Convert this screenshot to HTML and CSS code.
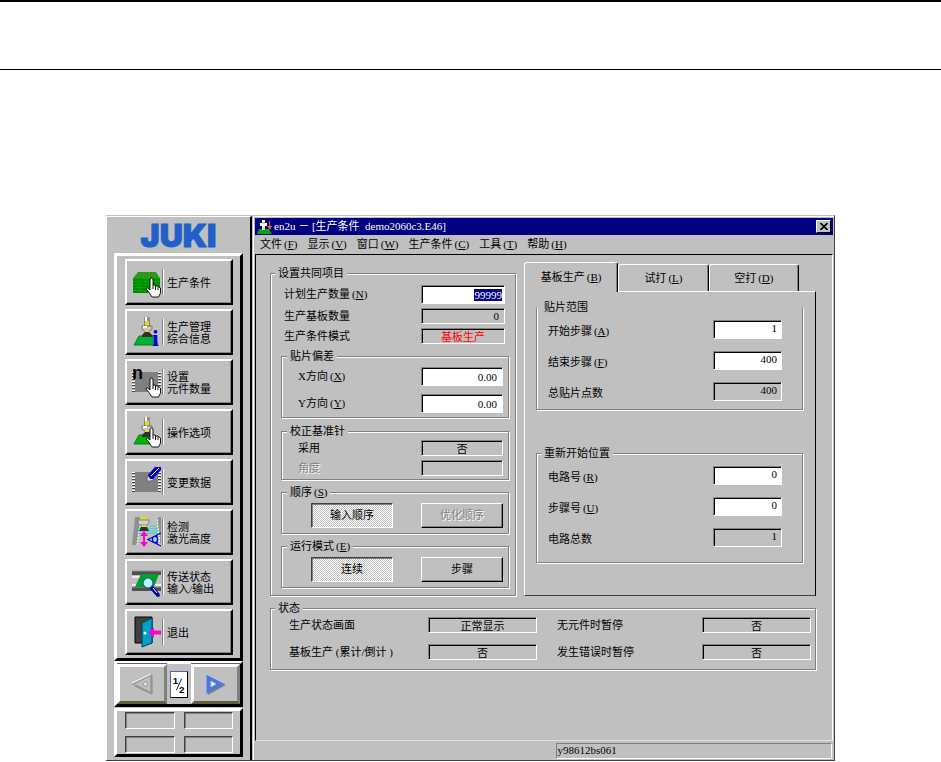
FILE: index.html
```html
<!DOCTYPE html>
<html lang="zh-CN">
<head>
    <meta charset="UTF-8">
    <meta name="viewport" content="width=device-width, initial-scale=1.0">
    <title>生产条件</title>
    <link rel="stylesheet" href="styles.css">
</head>
<body>
    <!-- shared icon parts -->
    <svg class="defs" aria-hidden="true">
        <symbol id="hand" viewBox="0 0 17 21">
            <path d="M5 2Q6.500 0 8 2V8L10 8 11 9 13 9 14 10 15.500 11V16L13.500 20H7L4 15.500 1 12 2 10.500 5 13Z" fill="#fff" stroke="#000" stroke-width="0.9"/>
            <path d="M8 8v4M10.500 9v4M13 10v3" stroke="#000" stroke-width="0.9"/>
        </symbol>
        <symbol id="nozzle" viewBox="0 0 12 20">
            <path d="M3 0h6v5H3z" fill="#909090"/>
            <path d="M4 0h2v5H4z" fill="#fff"/>
            <path d="M3 4h6v5H3z" fill="#808080"/>
            <path d="M4 4h4v5H4z" fill="#e8d820"/>
            <path d="M1 9h10v3l-2 2H3l-2-2z" fill="#c8c8c8" stroke="#606060" stroke-width="0.8"/>
            <path d="M2 9h4v2H2z" fill="#fff"/>
            <path d="M4 13h4v2H4z" fill="#e8d820"/>
            <path d="M4 15h4l3 3v2H1v-2z" fill="#303030"/>
        </symbol>
        <symbol id="chip" viewBox="0 0 30 20">
            <path d="M1.500 0v20M27.500 0v20" stroke="#fff" stroke-width="3" stroke-dasharray="1 2"/>
            <path d="M1.500 1v19M27.500 1v19" stroke="#404040" stroke-width="3" stroke-dasharray="1 2"/>
            <path d="M3 0h23v20H3z" fill="#808080"/>
        </symbol>
    </svg>

    <header class="page-head"></header>

    <div class="window">
        <aside class="sidebar">
            <div class="logo">JUKI</div>

            <nav class="panel nav">
                <button class="nav-btn" type="button">
                    <svg class="icon" viewBox="0 0 30 32">
                        <path d="M6 6h18l4 6H1z" fill="#20b020"/>
                        <path d="M6 7h18M5 9h20M3 11h23" stroke="#506010" stroke-dasharray="2 1"/>
                        <path d="M1 12h27v15H1z" fill="#00a800"/>
                        <path d="M1 14h27M1 17h27M1 20h27M1 23h27M1 26h27" stroke="#007000"/>
                        <use href="#hand" x="13" y="11" width="17" height="21"/>
                    </svg>
                    <span class="nav-text">生产条件</span>
                </button>
                <button class="nav-btn" type="button">
                    <svg class="icon" viewBox="0 0 30 32">
                        <path d="M7 20h15l4 9H2z" fill="#00b030" stroke="#008020"/>
                        <use href="#nozzle" x="9" y="1" width="12" height="20"/>
                        <text x="20" y="30" class="glyph-i">i</text>
                    </svg>
                    <span class="nav-text">生产管理<br>综合信息</span>
                </button>
                <button class="nav-btn" type="button">
                    <svg class="icon" viewBox="0 0 30 32">
                        <use href="#chip" x="0" y="6" width="30" height="20"/>
                        <text x="0" y="13" class="glyph-n">n</text>
                        <use href="#hand" x="13" y="11" width="17" height="21"/>
                    </svg>
                    <span class="nav-text">设置<br>元件数量</span>
                </button>
                <button class="nav-btn" type="button">
                    <svg class="icon" viewBox="0 0 30 32">
                        <path d="M7 19h13l4 9H2z" fill="#00b800" stroke="#008020"/>
                        <use href="#nozzle" x="9" y="1" width="12" height="20"/>
                        <use href="#hand" x="13" y="11" width="17" height="21"/>
                    </svg>
                    <span class="nav-text">操作选项</span>
                </button>
                <button class="nav-btn" type="button">
                    <svg class="icon" viewBox="0 0 30 32">
                        <use href="#chip" x="0" y="6" width="30" height="20"/>
                        <path d="M15 12l3-3 4 4-3 2h-4z" fill="#ddd" stroke="#606060" stroke-width="0.8"/>
                        <path d="M16 9l7-8h6v3l-8 9h-3z" fill="#0000c8"/>
                        <path d="M19 10l8-8" stroke="#fff"/>
                    </svg>
                    <span class="nav-text">变更数据</span>
                </button>
                <button class="nav-btn" type="button">
                    <svg class="icon" viewBox="0 0 30 32">
                        <path d="M3 1h6L5 29H0z" fill="#909090"/>
                        <path d="M25 1h4v28h-1z" fill="#909090"/>
                        <path d="M5 29L9 1M28 29L25 1" stroke="#fff" stroke-dasharray="2 1"/>
                        <path d="M7 10h18M6 12.500h20M6 15h20M5 17.500h22" stroke="#20d8d8" stroke-width="0.8"/>
                        <path d="M8 1h7v3H8z" fill="#e8d820"/>
                        <path d="M6 4h11v3l-2 2H8L6 7z" fill="#d0d0d0" stroke="#707070" stroke-width="0.8"/>
                        <path d="M10 9h4v2h-4z" fill="#e8d820"/>
                        <path d="M9 11h6l2 4H7z" fill="#303030"/>
                        <path d="M12 15l4 5h-3v6h3l-4 5-4-5h3v-6H8z" fill="#f0c"/>
                        <path d="M29 17L16 23.500 29 30M25 19v9" fill="none" stroke="#0000d0" stroke-width="1.2"/>
                        <ellipse cx="23" cy="23.500" rx="2.500" ry="3" fill="#a0e0ff" stroke="#0000d0" stroke-width="1.2"/>
                    </svg>
                    <span class="nav-text">检测<br>激光高度</span>
                </button>
                <button class="nav-btn" type="button">
                    <svg class="icon" viewBox="0 0 30 32">
                        <path d="M0 5h29v4H0zM0 21h29v4H0z" fill="#505050"/>
                        <path d="M0 5h29M0 21h29" stroke="#909090"/>
                        <path d="M0 11h8M0 19h29" stroke="#eee" stroke-width="2"/>
                        <path d="M9 8h18l-5 13H3z" fill="#00a030"/>
                        <path d="M20 22l6 7" stroke="#0000a0" stroke-width="4" stroke-linecap="round"/>
                        <path d="M21 22l4 5" stroke="#fff"/>
                        <circle cx="16" cy="17" r="5" fill="#b8f4ff" stroke="#206080" stroke-width="1.2"/>
                    </svg>
                    <span class="nav-text">传送状态<br>输入/输出</span>
                </button>
                <button class="nav-btn" type="button">
                    <svg class="icon" viewBox="0 0 30 32">
                        <path d="M3 1h17v26H3z" fill="#404040" stroke="#000"/>
                        <path d="M10 7l10-5v25l-10 4z" fill="#00a0c8" stroke="#004060"/>
                        <circle cx="13" cy="17" r="1.500" fill="#fff"/>
                        <path d="M16 16.500l6-5v3h7v4h-7v3z" fill="#f0c"/>
                    </svg>
                    <span class="nav-text">退出</span>
                </button>
            </nav>

            <div class="panel pager">
                <button class="page-btn" type="button" aria-label="上一页">
                    <svg width="22" height="22" viewBox="0 0 22 22">
                        <path d="M2 11L20 2v18z" fill="#c0c0c0" stroke="#a0a0a0" stroke-width="2"/>
                        <path d="M1 10L20 1" stroke="#fff"/>
                        <path d="M21 2v19L4 13" fill="none" stroke="#888"/>
                        <path d="M11 11l5-3v6z" fill="#e8e8e8" stroke="#999"/>
                    </svg>
                </button>
                <svg class="page-no" width="18" height="27" viewBox="0 0 18 27">
                    <text x="2" y="13">1</text>
                    <path d="M6 20l6-13" stroke="#000"/>
                    <text x="9" y="23">2</text>
                </svg>
                <button class="page-btn" type="button" aria-label="下一页">
                    <svg width="22" height="22" viewBox="0 0 22 22">
                        <path d="M22 12L4 22V4z" fill="#808080"/>
                        <path d="M21 11L2 21V1z" fill="#5078d0"/>
                        <path d="M2 20V1l18 9" fill="none" stroke="#b0c8ff"/>
                        <path d="M12 11l-5-3v6z" fill="#fff" stroke="#a0b8f0"/>
                    </svg>
                </button>
            </div>

            <div class="panel slots">
                <div class="slot"></div>
                <div class="slot"></div>
                <div class="slot"></div>
                <div class="slot"></div>
            </div>
        </aside>

        <main class="main">
            <div class="titlebar">
                <svg class="app-icon" width="15" height="15" viewBox="0 0 15 15">
                    <path d="M2 10h10l3 5H0z" fill="#00a020"/>
                    <path d="M5 1h3v3h2v3H8v4H5V7H3V4h2z" fill="#fff"/>
                    <path d="M5 3h3v2H5zM6 8h2v3H6z" fill="#e8e020"/>
                    <path d="M12 2v5h-2l3 4 2-4h-2V2z" fill="#f06020"/>
                </svg>
                <span class="title">en2u － [生产条件&nbsp; demo2060c3.E46]</span>
                <button class="close" type="button" aria-label="关闭">
                    <svg width="8" height="7" viewBox="0 0 8 7"><path d="M0.500 0l7 7M7.500 0l-7 7" stroke="#000" stroke-width="1.600"/></svg>
                </button>
            </div>

            <div class="menubar">
                <button type="button">文件<span class="key">(<u>F</u>)</span></button>
                <button type="button">显示<span class="key">(<u>V</u>)</span></button>
                <button type="button">窗口<span class="key">(<u>W</u>)</span></button>
                <button type="button">生产条件<span class="key">(<u>C</u>)</span></button>
                <button type="button">工具<span class="key">(<u>T</u>)</span></button>
                <button type="button">帮助<span class="key">(<u>H</u>)</span></button>
            </div>

            <div class="workspace">
                <div class="columns">
                    <fieldset class="group common">
                        <legend>设置共同项目</legend>
                        <div class="rows common-rows">
                            <div class="row">
                                <label for="plan">计划生产数量<span class="key">(<u>N</u>)</span></label>
                                <input class="field" id="plan" type="text" value="99999">
                            </div>
                            <div class="row">
                                <label for="made">生产基板数量</label>
                                <input class="field readonly" id="made" type="text" value="0" readonly>
                            </div>
                            <div class="row">
                                <label for="mode">生产条件模式</label>
                                <input class="field readonly center alert" id="mode" type="text" value="基板生产" readonly>
                            </div>
                        </div>

                        <fieldset class="group sub offset">
                            <legend>贴片偏差</legend>
                            <div class="row">
                                <label for="dx">X方向<span class="key">(<u>X</u>)</span></label>
                                <input class="field" id="dx" type="text" value="0.00">
                            </div>
                            <div class="row">
                                <label for="dy">Y方向<span class="key">(<u>Y</u>)</span></label>
                                <input class="field" id="dy" type="text" value="0.00">
                            </div>
                        </fieldset>

                        <fieldset class="group sub pin">
                            <legend>校正基准针</legend>
                            <div class="row">
                                <label for="use">采用</label>
                                <input class="field readonly center" id="use" type="text" value="否" readonly>
                            </div>
                            <div class="row">
                                <label class="disabled" for="angle">角度</label>
                                <input class="field readonly" id="angle" type="text" value="" disabled>
                            </div>
                        </fieldset>

                        <fieldset class="group sub">
                            <legend>顺序<span class="key">(<u>S</u>)</span></legend>
                            <div class="choice">
                                <button class="btn pressed" type="button" aria-pressed="true">输入顺序</button>
                                <button class="btn" type="button" disabled>优化顺序</button>
                            </div>
                        </fieldset>

                        <fieldset class="group sub">
                            <legend>运行模式<span class="key">(<u>E</u>)</span></legend>
                            <div class="choice">
                                <button class="btn pressed" type="button" aria-pressed="true">连续</button>
                                <button class="btn" type="button" aria-pressed="false">步骤</button>
                            </div>
                        </fieldset>
                    </fieldset>

                    <section class="tabs">
                        <div class="tablist" role="tablist">
                            <button class="tab active" type="button" role="tab" aria-selected="true">基板生产<span class="key">(<u>B</u>)</span></button>
                            <button class="tab" type="button" role="tab" aria-selected="false">试打<span class="key">(<u>L</u>)</span></button>
                            <button class="tab" type="button" role="tab" aria-selected="false">空打<span class="key">(<u>D</u>)</span></button>
                        </div>
                        <div class="tabpanel" role="tabpanel">
                            <fieldset class="group range open-top">
                                <legend>贴片范围</legend>
                                <div class="row">
                                    <label for="start">开始步骤<span class="key">(<u>A</u>)</span></label>
                                    <input class="field" id="start" type="text" value="1">
                                </div>
                                <div class="row">
                                    <label for="end">结束步骤<span class="key">(<u>F</u>)</span></label>
                                    <input class="field" id="end" type="text" value="400">
                                </div>
                                <div class="row">
                                    <label for="points">总贴片点数</label>
                                    <input class="field readonly" id="points" type="text" value="400" readonly>
                                </div>
                            </fieldset>
                            <fieldset class="group range restart">
                                <legend>重新开始位置</legend>
                                <div class="row">
                                    <label for="circuit">电路号<span class="key">(<u>R</u>)</span></label>
                                    <input class="field" id="circuit" type="text" value="0">
                                </div>
                                <div class="row">
                                    <label for="step">步骤号<span class="key">(<u>U</u>)</span></label>
                                    <input class="field" id="step" type="text" value="0">
                                </div>
                                <div class="row">
                                    <label for="circuits">电路总数</label>
                                    <input class="field readonly" id="circuits" type="text" value="1" readonly>
                                </div>
                            </fieldset>
                        </div>
                    </section>
                </div>

                <fieldset class="group status">
                    <legend>状态</legend>
                    <div class="status-grid">
                        <label for="s1">生产状态画面</label>
                        <input class="field readonly center" id="s1" type="text" value="正常显示" readonly>
                        <label class="second" for="s2">无元件时暂停</label>
                        <input class="field readonly center" id="s2" type="text" value="否" readonly>
                        <label for="s3">基板生产 (累计/倒计 )</label>
                        <input class="field readonly center" id="s3" type="text" value="否" readonly>
                        <label class="second" for="s4">发生错误时暂停</label>
                        <input class="field readonly center" id="s4" type="text" value="否" readonly>
                    </div>
                </fieldset>
            </div>

            <footer class="statusbar">
                <div class="machine">y98612bs061</div>
            </footer>
        </main>
    </div>

    <script>
        // Ready to type over the planned quantity
        const plan = document.getElementById('plan');
        plan.focus();
        plan.select();
    </script>
</body>
</html>
```
FILE: styles.css
```css
* {
    box-sizing: border-box;
}

body {
    margin: 0;
    background: #fff;
    color: #000;
    font-family: "Liberation Serif", "Noto Sans CJK SC", serif;
    font-size: 11px;
    line-height: 13px;
}

button, input {
    font: inherit;
    color: inherit;
}

button {
    margin: 0;
    padding: 0;
    border: none;
    background: #c0c0c0;
}

.defs {
    display: block;
    width: 0;
    height: 0;
}

.page-head {
    height: 70px;
    margin-bottom: 145px;
    border-top: 2px solid #000;
    border-bottom: 1px solid #000;
}

.window {
    display: flex;
    margin: 0 106px;
    background: #c0c0c0;
    border-top: 1px solid #c0c0c0;
    border-right: 1px solid #404040;
    border-bottom: 1px solid #404040;
}

/* sidebar */
.sidebar {
    flex: none;
    width: 146px;
    display: flex;
    flex-direction: column;
    padding: 0 7px 3px 7px;
    border-left: 1px solid #fff;
    border-top: 1px solid #fff;
    border-right: 2px solid #000;
}

.logo {
    height: 36px;
    line-height: 37px;
    text-align: center;
    font-family: Inter, "Liberation Sans", sans-serif;
    font-weight: 900;
    font-size: 32px;
    color: #2060c8;
    -webkit-text-stroke: 1px #2060c8;
}

.panel {
    border: 3px solid;
    border-color: #fff #000 #000 #fff;
}

.nav {
    display: flex;
    flex-direction: column;
    gap: 4px;
    padding: 3px 7px 3px 8px;
}

.nav-btn {
    display: flex;
    align-items: center;
    height: 46px;
    padding-left: 5px;
    border: 2px solid;
    border-color: #fff #000 #000 #fff;
    box-shadow: inset -1px -1px 0 #808080;
    text-align: left;
    line-height: 12px;
}

.icon {
    flex: none;
    width: 30px;
    height: 32px;
    overflow: visible;
}

.nav-text {
    display: flex;
    align-items: center;
    height: 26px;
    padding-top: 1px;
    padding-left: 4px;
    border-left: 1px solid #808080;
    box-shadow: inset 1px 0 0 #fff;
    white-space: nowrap;
}

.glyph-i {
    font: bold 24px "Liberation Serif", serif;
    fill: #0000e0;
}

.glyph-n {
    font: bold 18px "Liberation Sans", sans-serif;
    fill: #000;
}

.pager {
    display: flex;
    align-items: center;
    height: 46px;
}

.page-btn {
    flex: 1;
    display: flex;
    align-items: center;
    justify-content: center;
    align-self: stretch;
    border: 3px solid;
    border-color: #fff #808080 #606040 #fff;
    box-shadow: 0 -1px 0 #606090;
}

.page-no {
    flex: none;
    margin: 0 3px;
    background: #fff;
    border: 1px solid;
    border-color: #6060a0 #000 #000 #6060a0;
    font: bold 11px "Liberation Sans", sans-serif;
}

.slots {
    display: grid;
    grid-template-columns: 1fr 1fr;
    gap: 7px 9px;
    margin-top: 1px;
    padding: 1px 7px 1px 8px;
}

.slot {
    height: 17px;
    border: 1px solid;
    border-color: #404040 #fff #fff #404040;
    box-shadow: inset 1px 1px 0 #808080;
}

/* main window */
.main {
    flex: 1;
    display: flex;
    flex-direction: column;
    margin-left: 1px;
    padding: 1px;
    border-left: 1px solid #fff;
    border-top: 1px solid #fff;
}

.titlebar {
    display: flex;
    align-items: center;
    gap: 2px;
    height: 17px;
    padding: 0 2px;
    background: #000080;
    color: #fff;
}

.title {
    flex: 1;
    white-space: nowrap;
}

.close {
    display: flex;
    align-items: center;
    justify-content: center;
    width: 15px;
    height: 13px;
    border: 1px solid;
    border-color: #fff #000 #000 #fff;
}

.menubar {
    display: flex;
    gap: 10px;
    height: 19px;
    padding: 0 5px;
}

.menubar button {
    white-space: nowrap;
}

.key {
    margin-left: 2px;
}

.workspace {
    flex: 1;
    padding: 7px 16px 0 14px;
    border: 1px solid;
    border-color: #000 #fff #e0e0e0 #000;
}

.columns {
    display: grid;
    grid-template-columns: 245fr 291fr;
    gap: 8px;
}

.group {
    min-width: 0;
    margin: 0;
    padding: 0;
    border: 1px solid #808080;
    box-shadow: inset 1px 1px 0 #fff, 1px 1px 0 #fff;
}

.group legend {
    margin-left: 5px;
    padding: 0 3px;
    background: #c0c0c0;
}

.row {
    display: flex;
    align-items: center;
    justify-content: space-between;
}

.disabled {
    color: #808080;
    text-shadow: 1px 1px 0 #fff;
}

.field {
    height: 19px;
    padding: 0 5px;
    background: #fff;
    border: 1px solid;
    border-color: #808080 #fff #fff #808080;
    box-shadow: inset 1px 1px 0 #000;
    border-radius: 0;
    outline: none;
    text-align: right;
}

.field.readonly {
    height: 16px;
    background: #c0c0c0;
}

.field.center {
    text-align: center;
}

.field.alert {
    color: #f00;
}

.field::selection {
    background: #000080;
    color: #fff;
}

#plan {
    padding-right: 2px;
}

.common {
    margin-top: 5px;
    padding: 5px 6px 7px 10px;
}

.common > legend {
    margin-left: -6px;
}

.common-rows {
    display: grid;
    gap: 4px;
    padding: 0 4px 0 3px;
}

.common-rows .field {
    width: 84px;
}

.sub {
    margin-top: 6px;
}

.sub .row {
    padding: 0 5px 0 16px;
}

.sub .field {
    width: 82px;
}

.offset {
    padding: 4px 0;
}

.offset .row + .row {
    margin-top: 8px;
}

.pin {
    margin-top: 7px;
    padding: 2px 0 3px;
}

.pin .row + .row {
    margin-top: 4px;
}

.choice {
    display: flex;
    justify-content: flex-end;
    gap: 28px;
    padding: 4px 5px 5px;
}

.btn {
    width: 82px;
    height: 25px;
    border: 1px solid;
    border-color: #fff #000 #000 #fff;
    box-shadow: inset -1px -1px 0 #808080;
}

.btn:disabled {
    color: #808080;
    text-shadow: 1px 1px 0 #fff;
}

.btn.pressed {
    border-color: #404040 #fff #fff #404040;
    box-shadow: inset 1px 1px 0 #808080;
    background: repeating-conic-gradient(#fff 0 25%, #c0c0c0 0 50%) 0 0 / 2px 2px;
}

/* tabs */
.tabs {
    display: flex;
    flex-direction: column;
}

.tablist {
    display: flex;
    align-items: flex-end;
    height: 29px;
    padding-right: 17px;
}

.tab {
    flex: 90;
    height: 27px;
    border: 1px solid;
    border-color: #fff #000 transparent #fff;
    border-bottom: none;
    border-radius: 3px 3px 0 0;
    box-shadow: inset -1px 0 0 #808080;
}

.tab.active {
    position: relative;
    flex: 94;
    height: 30px;
    margin-bottom: -1px;
}

.tabpanel {
    flex: 1;
    padding: 9px 12px 0 11px;
    border: 1px solid;
    border-color: #fff #000 #404040 #fff;
}

.range {
    padding: 6px 20px 8px 11px;
}

.range > legend {
    margin-left: -7px;
}

.range label {
    padding-top: 3px;
}

.range .field {
    width: 69px;
    height: 19px;
    padding-right: 4px;
    padding-bottom: 3px;
}

.range .row + .row {
    margin-top: 12px;
}

.open-top {
    border-top-color: transparent;
    box-shadow: inset 1px 0 0 #fff, 1px 1px 0 #fff;
}

.restart {
    margin-top: 37px;
    padding-bottom: 15px;
}

/* status */
.status {
    margin-top: 6px;
    padding: 2px 4px 9px 18px;
}

.status > legend {
    margin-left: -14px;
}

.status-grid {
    display: grid;
    grid-template-columns: 138fr 109px 164fr 109px;
    gap: 11px 0;
    align-items: center;
}

.status-grid label {
    padding-top: 1px;
    line-height: 15px;
}

.status-grid .field {
    width: 100%;
}

.second {
    padding-left: 20px;
}

.statusbar {
    display: flex;
    justify-content: flex-end;
    padding: 2px 1px 0;
}

.machine {
    width: 48%;
    height: 16px;
    padding-left: 1px;
    border: 1px solid;
    border-color: #808080 #fff #fff #808080;
}
```
